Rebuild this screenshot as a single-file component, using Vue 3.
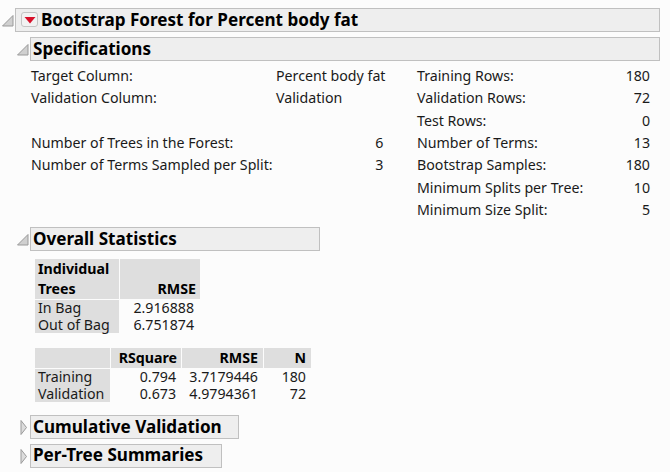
<template>
  <main class="report">
    <section class="outline">
      <header class="head-row">
        <svg class="disclosure" width="15" height="15" viewBox="0 0 15 15"><path d="M13 2.5V13H2.5Z" fill="#d0d0d0" stroke="#9a9a9a" stroke-width="1" /></svg>
        <div class="title-bar main-bar">
          <button class="menu-btn" type="button">
            <svg width="12" height="8" viewBox="0 0 12 8"><path d="M0.5 1H11.5L6 7.5Z" fill="#d8102a" /></svg>
          </button>
          <h1>Bootstrap Forest for Percent body fat</h1>
        </div>
      </header>

      <section class="outline nested">
        <header class="head-row">
          <svg class="disclosure" width="15" height="15" viewBox="0 0 15 15"><path d="M13 2.5V13H2.5Z" fill="#d0d0d0" stroke="#9a9a9a" stroke-width="1" /></svg>
          <div class="title-bar full"><h2>Specifications</h2></div>
        </header>
        <div class="spec-body">
          <div class="spec-col left">
            <template v-for="row in leftSpecs" :key="row.label">
              <span class="spec-label">{{ row.label }}</span>
              <span :class="row.num ? 'num' : 'spec-text'">{{ row.value }}</span>
            </template>
          </div>
          <div class="spec-col right">
            <template v-for="row in rightSpecs" :key="row.label">
              <span class="spec-label">{{ row.label }}</span>
              <span class="num">{{ row.value }}</span>
            </template>
          </div>
        </div>
      </section>

      <section class="outline nested stats">
        <header class="head-row">
          <svg class="disclosure" width="15" height="15" viewBox="0 0 15 15"><path d="M13 2.5V13H2.5Z" fill="#d0d0d0" stroke="#9a9a9a" stroke-width="1" /></svg>
          <div class="title-bar stats-bar"><h2>Overall Statistics</h2></div>
        </header>
        <div class="stats-body">
          <div class="grid trees">
            <div class="th left-head">Individual<br />Trees</div>
            <div class="th">RMSE</div>
            <div class="row-names">
              <span>In Bag</span>
              <span>Out of Bag</span>
            </div>
            <div class="cells">
              <span>2.916888</span>
              <span>6.751874</span>
            </div>
          </div>
          <div class="grid fits">
            <div class="th"></div>
            <div class="th">RSquare</div>
            <div class="th wide-pad">RMSE</div>
            <div class="th wide-pad">N</div>
            <div class="row-names">
              <span>Training</span>
              <span>Validation</span>
            </div>
            <div class="cells"><span>0.794</span><span>0.673</span></div>
            <div class="cells"><span>3.7179446</span><span>4.9794361</span></div>
            <div class="cells"><span>180</span><span>72</span></div>
          </div>
        </div>
      </section>

      <section class="outline nested collapsed first">
        <header class="head-row">
          <svg class="disclosure" width="15" height="19" viewBox="0 0 15 19"><path d="M6 2.5L11.5 9.5L6 16.5Z" fill="#dcdcdc" stroke="#9a9a9a" stroke-width="1" /></svg>
          <div class="title-bar cumulative"><h2>Cumulative Validation</h2></div>
        </header>
      </section>
      <section class="outline nested collapsed">
        <header class="head-row">
          <svg class="disclosure" width="15" height="19" viewBox="0 0 15 19"><path d="M6 2.5L11.5 9.5L6 16.5Z" fill="#dcdcdc" stroke="#9a9a9a" stroke-width="1" /></svg>
          <div class="title-bar per-tree"><h2>Per-Tree Summaries</h2></div>
        </header>
      </section>
    </section>
  </main>
</template>

<script setup>
const leftSpecs = [
  { label: 'Target Column:', value: 'Percent body fat' },
  { label: 'Validation Column:', value: 'Validation' },
  { label: '\u00a0', value: '' },
  { label: 'Number of Trees in the Forest:', value: '6', num: true },
  { label: 'Number of Terms Sampled per Split:', value: '3', num: true },
]

const rightSpecs = [
  { label: 'Training Rows:', value: '180' },
  { label: 'Validation Rows:', value: '72' },
  { label: 'Test Rows:', value: '0' },
  { label: 'Number of Terms:', value: '13' },
  { label: 'Bootstrap Samples:', value: '180' },
  { label: 'Minimum Splits per Tree:', value: '10' },
  { label: 'Minimum Size Split:', value: '5' },
]
</script>

<style scoped>
.report {
  width: 670px;
  height: 472px;
  padding: 8px 10px 0 0;
  box-sizing: border-box;
  overflow: hidden;
  background: #fcfcfc;
  color: #1a1a1a;
  font-family: "Noto Sans", "Liberation Sans", sans-serif;
  font-size: 14.2px;
}

.head-row {
  display: flex;
  align-items: center;
}

.disclosure {
  flex: none;
}

.title-bar {
  display: flex;
  align-items: center;
  box-sizing: border-box;
  height: 24px;
  padding: 0 0 1px 2px;
  border: 1px solid #c0c0c0;
  background: #eeeeee;
}

.main-bar,
.full {
  flex: 1;
}

.main-bar {
  gap: 3px;
  padding-left: 5px;
}

.cumulative {
  width: 209px;
}

.per-tree {
  width: 192px;
  padding-bottom: 3px;
}

.menu-btn {
  display: flex;
  align-items: center;
  justify-content: center;
  width: 17px;
  height: 15px;
  padding: 0;
  border: 1px solid #c4c4c4;
  border-radius: 3px;
  background: #f2f2f2;
}

h1,
h2 {
  margin: 0;
  color: #000;
  font-size: 17.1px;
  font-weight: 700;
  line-height: 1;
  white-space: nowrap;
}

.nested {
  margin: 5px 0 0 15px;
}

.spec-body {
  display: flex;
  gap: 34px;
  padding: 4px 10px 0 16px;
}

.spec-col {
  display: grid;
  grid-auto-rows: 22.3px;
  align-items: center;
  line-height: 22px;
  white-space: nowrap;
}

.left {
  width: 352px;
  grid-template-columns: 245px 1fr;
  align-content: start;
}

.left .num {
  padding-right: 2px;
}

.right {
  flex: 1;
  grid-template-columns: 1fr auto;
}

.num {
  text-align: right;
}

.stats {
  margin-top: 6px;
}

.stats-bar {
  width: 290px;
}

.stats-body {
  padding: 8px 0 0 20px;
}

.grid {
  display: grid;
  gap: 1px;
  line-height: 16.5px;
}

.trees {
  grid-template-columns: 84px 80px;
  width: 165px;
}

.fits {
  grid-template-columns: 75px 70px 81px 47px;
  width: 276px;
  margin-top: 15px;
}

.th {
  display: flex;
  align-items: flex-end;
  justify-content: flex-end;
  box-sizing: border-box;
  padding: 0 4px 0;
  background: #dedede;
  color: #000;
  font-weight: 700;
  line-height: 20px;
}

.th.wide-pad {
  padding-right: 5px;
}

.left-head {
  display: block;
  text-align: left;
  padding: 0 3px;
}

.row-names {
  display: flex;
  flex-direction: column;
  padding: 0 3px;
  background: #dedede;
}

.cells {
  display: flex;
  flex-direction: column;
  padding: 0 5px;
  text-align: right;
}

.trees .cells {
  padding-right: 6px;
}

.collapsed.first {
  margin-top: 13px;
}
</style>

<style>
html,
body {
  background: #fcfcfc;
}
</style>
